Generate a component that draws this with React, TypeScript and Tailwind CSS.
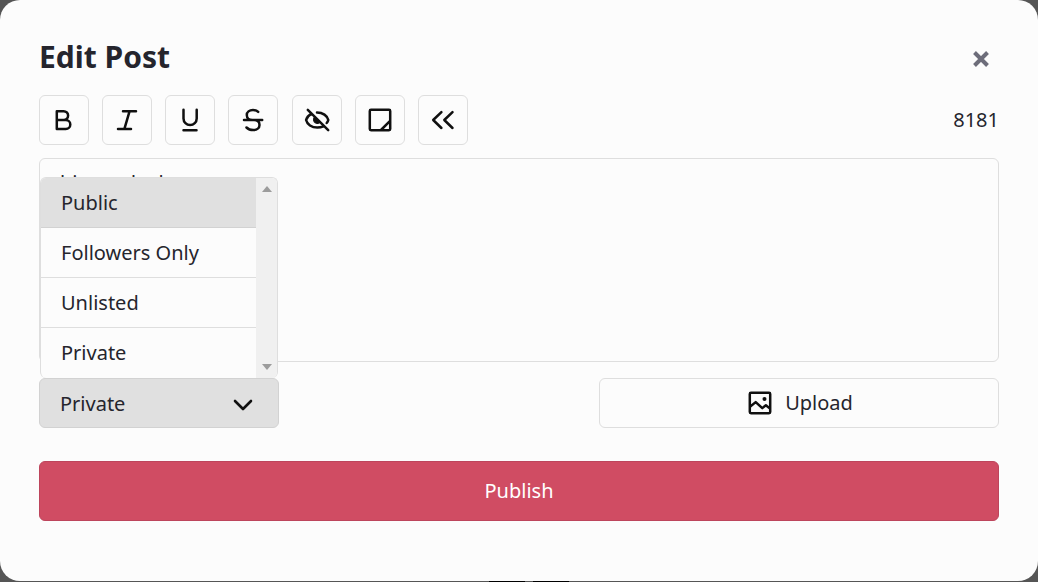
import { useState } from "react";
import type { ReactNode } from "react";

function Icon({ children, size = 30 }: { children: ReactNode; size?: number }) {
  return (
    <svg
      width={size}
      height={size}
      viewBox="0 0 30 30"
      fill="none"
      stroke="#101010"
      strokeWidth="2.5"
      strokeLinecap="round"
      strokeLinejoin="round"
      aria-hidden="true"
    >
      {children}
    </svg>
  );
}

const tools: { label: string; icon: ReactNode }[] = [
  {
    label: "Bold",
    icon: (
      <Icon>
        <path d="M7.800 6.200h6.900a4.400 4.400 0 0 1 0 8.800H7.800zM7.800 15h9a4.500 4.500 0 0 1 0 9h-9z" />
      </Icon>
    ),
  },
  {
    label: "Italic",
    icon: (
      <Icon>
        <path d="M11 6.200h13M6 23.900h13M17.600 6.200l-5.200 17.700" />
      </Icon>
    ),
  },
  {
    label: "Underline",
    icon: (
      <Icon>
        <path d="M8.500 4.800v8.700a6.600 6.600 0 0 0 13.200 0V4.800M8.500 25.200h13" />
      </Icon>
    ),
  },
  {
    label: "Strikethrough",
    icon: (
      <Icon>
        <path d="M6 15.100h18.200M20.200 6.800C19 5.600 17.400 5 15 5c-3.700 0-6.200 2.100-6.200 5s2.200 5.100 5.600 5.100h1.700c3.400 0 5.400 2 5.400 4.800 0 3-2.500 5.200-6.300 5.200-2.700 0-5-.9-6.700-2.600" />
      </Icon>
    ),
  },
  {
    label: "Spoiler",
    icon: (
      <Icon>
        <path d="M5.800 4.800l20.400 20.400M9.300 8.900C6.600 10.400 4.600 12.800 4.100 15c1 4.300 5.600 7.600 11.200 7.600 2.200 0 4.200-.4 5.900-1.300M15 7.500c5.800 0 10.300 3.200 11.300 7.500-.3 1.100-.8 2.100-1.600 3" />
        <path d="M12.600 11.800c-1.600 2-1.200 4.800.7 5.900 1.500.9 3.400.6 4.600-.4z" fill="#101010" strokeWidth="1.200" />
      </Icon>
    ),
  },
  {
    label: "Note",
    icon: (
      <Icon>
        <path d="M6 4.800h18a1.200 1.200 0 0 1 1.200 1.200v18a1.200 1.200 0 0 1-1.200 1.200H6A1.200 1.200 0 0 1 4.800 24V6A1.200 1.200 0 0 1 6 4.800zM16 25l9.100-9.100" />
      </Icon>
    ),
  },
  {
    label: "Quote",
    icon: (
      <Icon>
        <path d="M13.400 7.100L5.200 15l8.200 8M24.500 7.100L16.300 15l8.200 8" />
      </Icon>
    ),
  },
];

const options = ["Public", "Followers Only", "Unlisted", "Private"];

export default function App() {
  const [text, setText] = useState("hi one deal");
  const [visibility, setVisibility] = useState("Private");

  return (
    <div className="relative min-h-screen bg-[#555555] pb-px font-['Noto_Sans',sans-serif] text-xl text-[#25252d]">
      <div className="absolute inset-x-0 bottom-0 flex h-px justify-center gap-2 pl-5">
        <span className="w-9 bg-black" />
        <span className="w-9 bg-black" />
      </div>
      <main className="relative flex min-h-[calc(100vh-1px)] flex-col rounded-[20px] bg-[#fcfcfc] px-[39px] pt-9 pb-[60px]">
        <header className="flex h-[42px] items-center justify-between">
          <h1 className="text-3xl font-bold">Edit Post</h1>
          <button type="button" aria-label="Close" className="flex h-10 w-9 items-center justify-center pt-1">
            <svg width="18" height="18" viewBox="0 0 18 18" stroke="#6d6d7a" strokeWidth="4" aria-hidden="true">
              <path d="M2.500 2.500l13 13M15.500 2.500l-13 13" />
            </svg>
          </button>
        </header>

        <div className="mt-[17px] flex items-center justify-between">
          <div className="flex w-[429px] justify-between">
            {tools.map((tool) => (
              <button
                key={tool.label}
                type="button"
                aria-label={tool.label}
                className="flex size-[50px] items-center justify-center rounded-md border border-[#dedede]"
              >
                {tool.icon}
              </button>
            ))}
          </div>
          <span>8181</span>
        </div>

        <textarea
          aria-label="Post text"
          value={text}
          onChange={(e) => setText(e.target.value)}
          className="mt-[13px] block h-[204px] w-full resize-none rounded-md border border-[#dedede] bg-transparent px-5 py-2.5 outline-none"
        />

        <div className="mt-4 flex justify-between">
          <div className="relative w-60">
            <select
              aria-label="Visibility"
              value={visibility}
              onChange={(e) => setVisibility(e.target.value)}
              className="h-[50px] w-full appearance-none rounded-md border border-[#d2d2d2] bg-[#e0e0e0] px-5 pt-0.5 outline-none"
            >
              {options.map((option) => (
                <option key={option}>{option}</option>
              ))}
            </select>
            <svg
              width="20"
              height="12"
              viewBox="0 0 20 12"
              fill="none"
              stroke="#101010"
              strokeWidth="2.600"
              strokeLinecap="round"
              strokeLinejoin="round"
              className="pointer-events-none absolute top-[21px] right-[26px]"
              aria-hidden="true"
            >
              <path d="M2 2l8 8 8-8" />
            </svg>

            <div className="absolute inset-x-px bottom-full flex overflow-hidden rounded-md border border-b-0 border-[#dedede] bg-[#fcfcfc]">
              <ul role="listbox" aria-label="Visibility options" className="flex-1">
                {options.map((option, i) => (
                  <li
                    key={option}
                    role="option"
                    aria-selected={option === visibility}
                    onClick={() => setVisibility(option)}
                    className={
                      i === 0
                        ? "flex h-[50px] items-center border-b border-[#d2d2d2] bg-[#e0e0e0] px-5"
                        : "flex h-[50px] items-center border-b border-[#dedede] px-5 last:border-b-0"
                    }
                  >
                    {option}
                  </li>
                ))}
              </ul>
              <div className="flex w-[21px] flex-col items-center justify-between bg-[#f0f0f0] py-2">
                <svg width="10" height="6" viewBox="0 0 10 6" fill="#9c9c9c" aria-hidden="true">
                  <path d="M5 0l5 6H0z" />
                </svg>
                <svg width="10" height="6" viewBox="0 0 10 6" fill="#9c9c9c" aria-hidden="true">
                  <path d="M0 0h10L5 6z" />
                </svg>
              </div>
            </div>
          </div>

          <button
            type="button"
            className="flex h-[50px] w-[400px] items-center justify-center gap-2.5 rounded-md border border-[#dedede]"
          >
            <Icon>
              <path d="M6 4.800h18a1.200 1.200 0 0 1 1.200 1.200v18a1.200 1.200 0 0 1-1.200 1.200H6A1.200 1.200 0 0 1 4.800 24V6A1.200 1.200 0 0 1 6 4.800zM5 18.800l5.700-4.700 6.600 6 3.600-2.900 4.100 3.400" />
              <circle cx="19.500" cy="11" r="2" fill="#101010" stroke="none" />
            </Icon>
            Upload
          </button>
        </div>

        <button
          type="button"
          className="mt-[33px] h-[60px] w-full rounded-md border border-[#bd455c] bg-[#d04c63] text-white"
        >
          Publish
        </button>
      </main>
    </div>
  );
}
